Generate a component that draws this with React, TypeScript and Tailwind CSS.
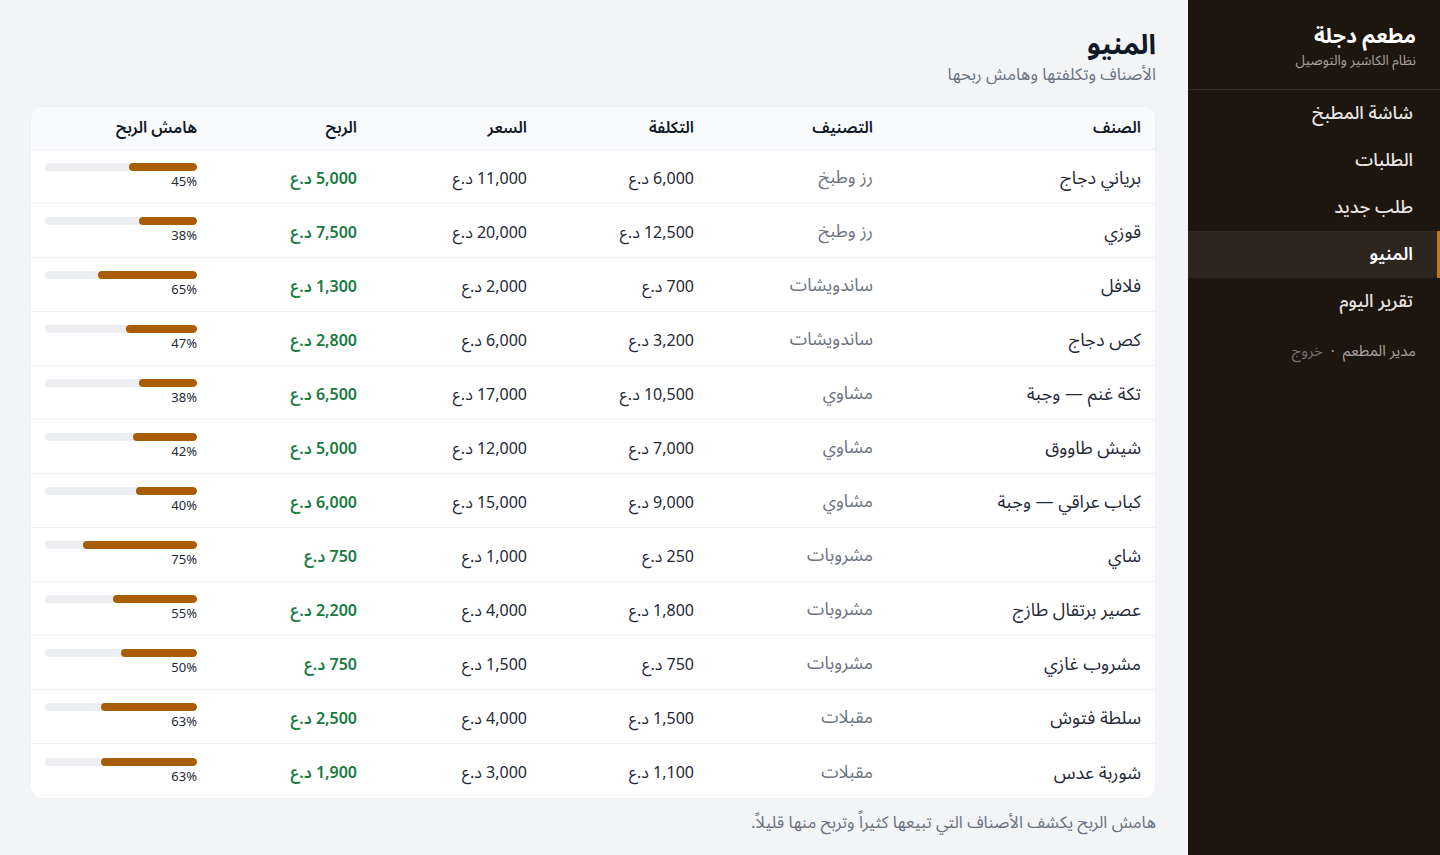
import React from 'react';

type Item = {
  name: string;
  category: string;
  cost: string;
  price: string;
  profit: string;
  margin: number;
};

const items: Item[] = [
  { name: 'برياني دجاج', category: 'رز وطبخ', cost: '6,000', price: '11,000', profit: '5,000', margin: 45 },
  { name: 'قوزي', category: 'رز وطبخ', cost: '12,500', price: '20,000', profit: '7,500', margin: 38 },
  { name: 'فلافل', category: 'ساندويشات', cost: '700', price: '2,000', profit: '1,300', margin: 65 },
  { name: 'كص دجاج', category: 'ساندويشات', cost: '3,200', price: '6,000', profit: '2,800', margin: 47 },
  { name: 'تكة غنم — وجبة', category: 'مشاوي', cost: '10,500', price: '17,000', profit: '6,500', margin: 38 },
  { name: 'شيش طاووق', category: 'مشاوي', cost: '7,000', price: '12,000', profit: '5,000', margin: 42 },
  { name: 'كباب عراقي — وجبة', category: 'مشاوي', cost: '9,000', price: '15,000', profit: '6,000', margin: 40 },
  { name: 'شاي', category: 'مشروبات', cost: '250', price: '1,000', profit: '750', margin: 75 },
  { name: 'عصير برتقال طازج', category: 'مشروبات', cost: '1,800', price: '4,000', profit: '2,200', margin: 55 },
  { name: 'مشروب غازي', category: 'مشروبات', cost: '750', price: '1,500', profit: '750', margin: 50 },
  { name: 'سلطة فتوش', category: 'مقبلات', cost: '1,500', price: '4,000', profit: '2,500', margin: 63 },
  { name: 'شوربة عدس', category: 'مقبلات', cost: '1,100', price: '3,000', profit: '1,900', margin: 63 },
];

const navItems = ['شاشة المطبخ', 'الطلبات', 'طلب جديد', 'المنيو', 'تقرير اليوم'];

const cols = 'grid grid-cols-[268px_179px_167px_170px_160px_1fr]';

const Sidebar: React.FC = () => (
  <aside className="w-[252px] shrink-0 bg-[#1c160e] min-h-[855px]">
    <div className="pt-[23px] pb-4 pr-6 border-b border-[#342c22]">
      <div className="text-[21px] leading-[26px] font-bold text-white">مطعم دجلة</div>
      <div className="text-[13.5px] leading-6 text-[#a8a29e]">نظام الكاشير والتوصيل</div>
    </div>
    <nav className="flex flex-col">
      {navItems.map((label) => {
        const active = label === 'المنيو';
        return (
          <div
            key={label}
            className={
              active
                ? 'h-[47px] flex items-center pr-[27px] text-[18px] font-semibold text-white bg-[#2d261f] border-r-[3px] border-[#c2760c]'
                : 'h-[47px] flex items-center pr-[27px] text-[18px] font-medium text-[#e7e5e4]'
            }
          >
            <span className={active ? '-mr-[3px]' : ''}>{label}</span>
          </div>
        );
      })}
    </nav>
    <div className="mt-4 pr-6 flex items-center text-[15px] leading-5 text-[#a8a29e]">
      <span>مدير المطعم</span>
      <span className="mx-2">·</span>
      <span className="text-[#78716c]">خروج</span>
    </div>
  </aside>
);

const MarginBar: React.FC<{ value: number }> = ({ value }) => (
  <div className="flex flex-col items-start gap-[3px]">
    <div className="w-[152px] h-2 rounded-full bg-[#eceef1] overflow-hidden flex">
      <div className="h-full rounded-full bg-[#a85d00]" style={{ width: `${value}%` }} />
    </div>
    <div className="text-[13px] leading-4 text-[#1f2937]">{value}%</div>
  </div>
);

const App: React.FC = () => {
  return (
    <div
      dir="rtl"
      className="flex min-h-[855px] bg-[#f3f4f6]"
      style={{ fontFamily: '"Noto Sans Arabic", "Noto Sans Arabic UI", "Noto Kufi Arabic", "Noto Sans", "DejaVu Sans", sans-serif' }}
    >
      <Sidebar />
      <main className="flex-1 px-8 pt-[30px]">
        <h1 className="text-[27.5px] leading-[30px] font-bold text-[#111827]">المنيو</h1>
        <p className="text-[16.7px] leading-[30px] text-[#6b7280]">الأصناف وتكلفتها وهامش ربحها</p>

        <div className="mt-4 bg-white rounded-xl border border-[#eef0f3] overflow-hidden">
          <div className={`${cols} h-[43px] items-center bg-[#f9fafb] border-b border-[#eef0f3] text-[16px] font-semibold text-[#111827]`}>
            <div className="px-[14px]">الصنف</div>
            <div className="px-[14px]">التصنيف</div>
            <div className="px-[14px]">التكلفة</div>
            <div className="px-[14px]">السعر</div>
            <div className="px-[14px]">الربح</div>
            <div className="px-[14px]">هامش الربح</div>
          </div>
          {items.map((it, i) => (
            <div
              key={it.name}
              className={`${cols} h-[54px] items-center text-[16px] ${i < items.length - 1 ? 'border-b border-[#f1f2f4]' : ''}`}
            >
              <div className="px-[14px] pt-1 text-[18px] text-[#1f2937]">{it.name}</div>
              <div className="px-[14px] pt-1 text-[17.5px] text-[#6b7280]">{it.category}</div>
              <div className="px-[14px] pt-1 text-[#1f2937]">{it.cost} د.ع</div>
              <div className="px-[14px] pt-1 text-[#1f2937]">{it.price} د.ع</div>
              <div className="px-[14px] pt-1 font-semibold text-[#1a7a43]">{it.profit} د.ع</div>
              <div className="px-[14px]">
                <MarginBar value={it.margin} />
              </div>
            </div>
          ))}
        </div>

        <p className="mt-3 text-[16.7px] leading-6 text-[#6b7280]">
          هامش الربح يكشف الأصناف التي تبيعها كثيراً وتربح منها قليلاً.
        </p>
      </main>
    </div>
  );
};

export default App;
